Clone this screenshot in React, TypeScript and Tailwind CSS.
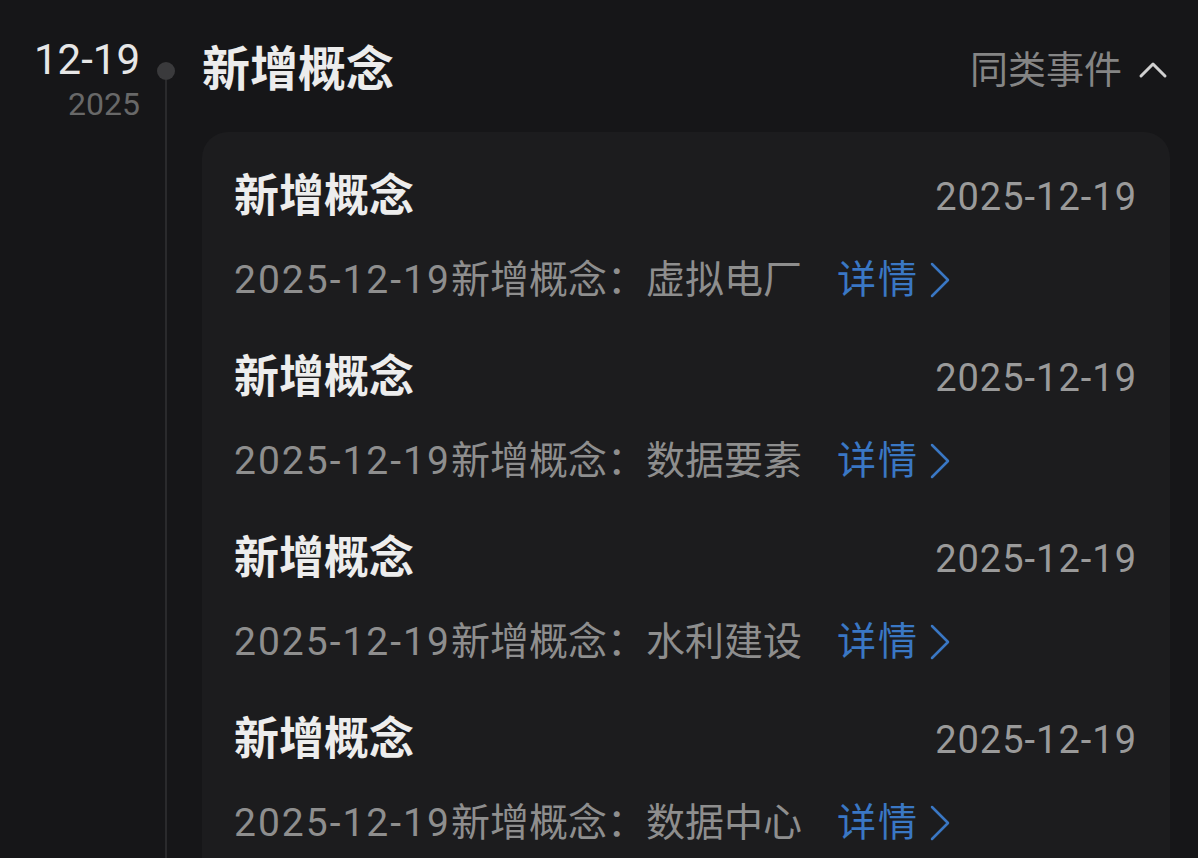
import React from 'react';

interface EventItem {
  id: number;
  title: string;
  date: string;
  concept: string;
}

const items: EventItem[] = [
  { id: 1, title: '新增概念', date: '2025-12-19', concept: '虚拟电厂' },
  { id: 2, title: '新增概念', date: '2025-12-19', concept: '数据要素' },
  { id: 3, title: '新增概念', date: '2025-12-19', concept: '水利建设' },
  { id: 4, title: '新增概念', date: '2025-12-19', concept: '数据中心' },
];

const ChevronUp = () => (
  <svg width="30" height="20" viewBox="0 0 30 20" fill="none">
    <polyline points="3,16 15,4 27,16" stroke="#d0d0d0" strokeWidth="3" strokeLinecap="round" strokeLinejoin="round" />
  </svg>
);

const ChevronRight = () => (
  <svg width="22" height="36" viewBox="0 0 22 36" fill="none">
    <polyline points="3,2 19,18 3,34" stroke="#3a77c4" strokeWidth="2.5" strokeLinecap="round" strokeLinejoin="round" />
  </svg>
);

const App: React.FC = () => {
  return (
    <div className="min-h-screen w-full bg-[#161618] font-['Roboto','Noto_Sans_CJK_SC',sans-serif] overflow-hidden">
      <div className="flex h-[858px] pt-[36px]">
        {/* Date column */}
        <div className="w-[140px] shrink-0 flex flex-col items-end">
          <div className="text-[42px] leading-[48px] text-[#e6e6e6]">12-19</div>
          <div className="text-[32px] leading-[36px] text-[#686868] mt-[2px]">2025</div>
        </div>

        {/* Timeline */}
        <div className="w-[52px] shrink-0 flex flex-col items-center pt-[26px]">
          <div className="w-[18px] h-[18px] rounded-full bg-[#3a3a3c]"></div>
          <div className="w-[2px] flex-1 bg-[#2a2a2c]"></div>
        </div>

        {/* Content */}
        <div className="flex-1 ml-[10px] mr-[28px]">
          <div className="flex items-center justify-between h-[68px]">
            <div className="text-[48px] leading-[60px] font-bold text-[#ececec]">新增概念</div>
            <div className="flex items-center gap-[16px] mr-[2px]">
              <span className="text-[38px] leading-[48px] text-[#858585]">同类事件</span>
              <ChevronUp />
            </div>
          </div>

          <div className="mt-[28px] rounded-[26px] bg-[#1c1c1e] pt-[35px] pl-[32px] pr-[33px]">
            {items.map((item) => (
              <div key={item.id} className="h-[181px]">
                <div className="flex items-center justify-between h-[60px]">
                  <span className="text-[45px] leading-[60px] font-bold text-[#ededed]">{item.title}</span>
                  <span className="text-[38px] leading-[60px] tracking-[1px] text-[#9a9a9a]">{item.date}</span>
                </div>
                <div className="flex items-center h-[60px] mt-[23px] text-[39px] leading-[60px] text-[#8e8e8e]">
                  <span className="tracking-[2px]">{item.date}</span>
                  <span>{item.title}：{item.concept}</span>
                  <span className="ml-[35px] flex items-center text-[#3a77c4]">
                    <span className="tracking-[2px]">详情</span>
                    <span className="ml-[10px] flex items-center">
                      <ChevronRight />
                    </span>
                  </span>
                </div>
              </div>
            ))}
          </div>
        </div>
      </div>
    </div>
  );
};

export default App;
